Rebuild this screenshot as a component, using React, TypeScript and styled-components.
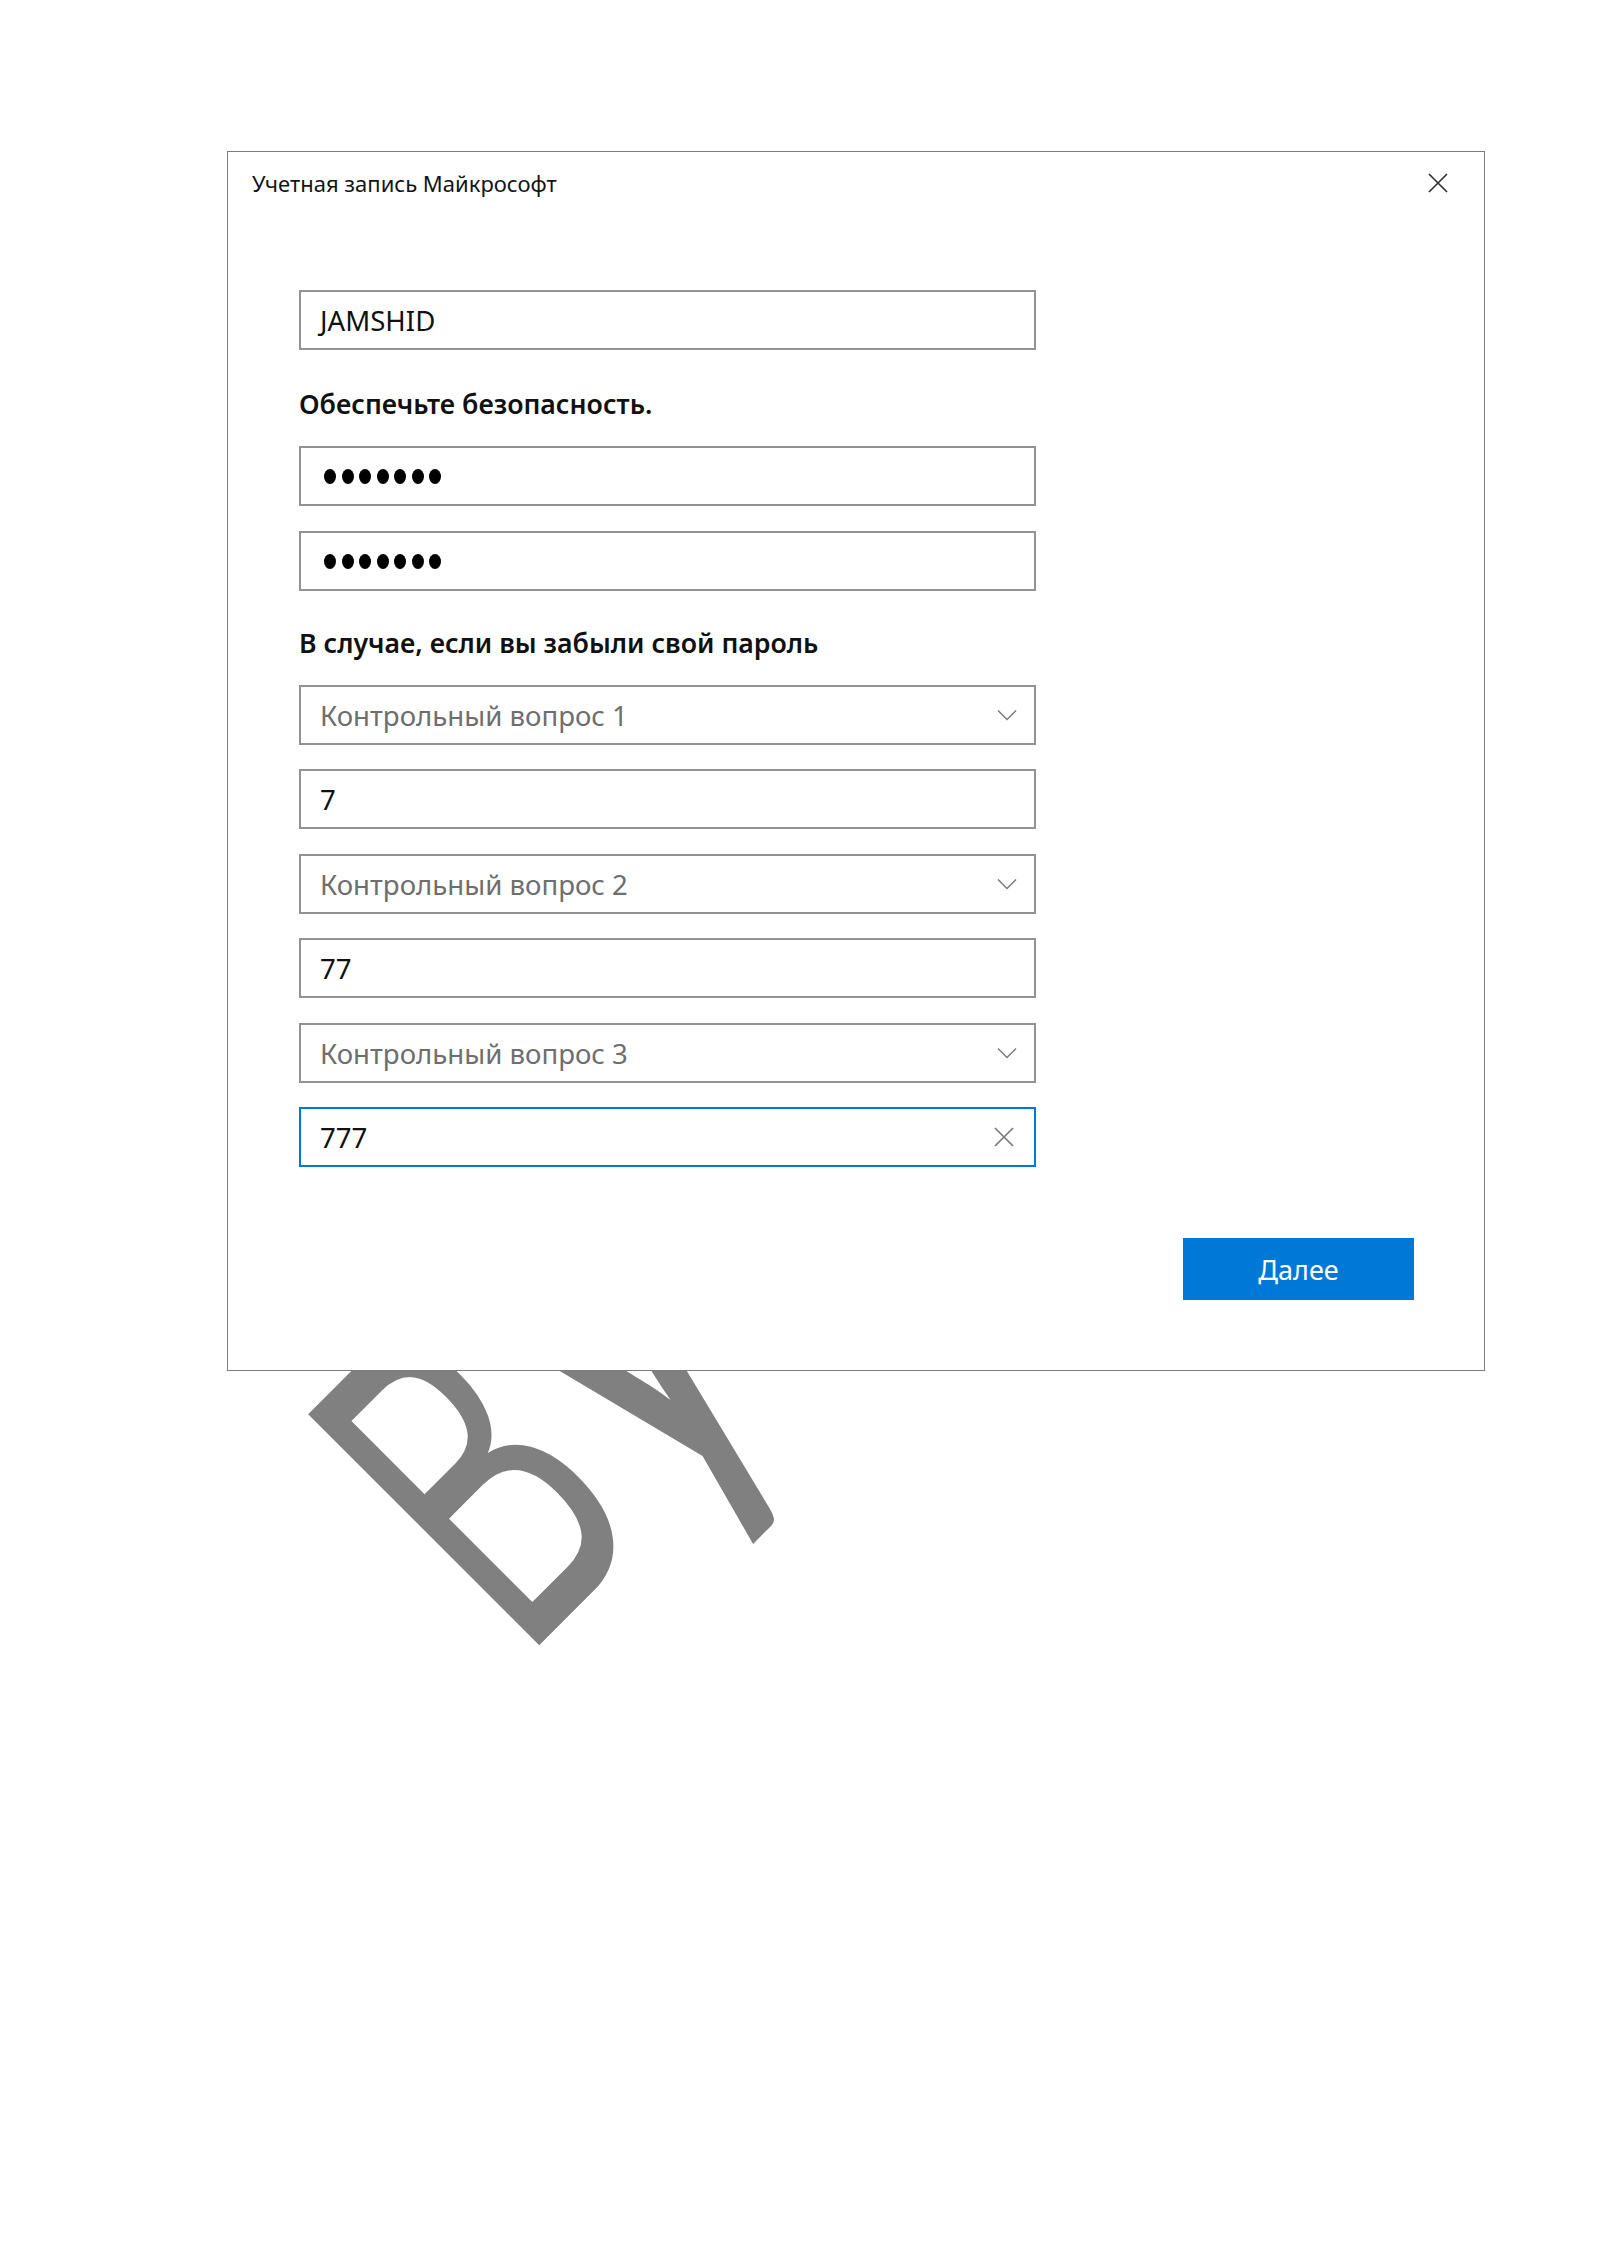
import React from 'react';
import styled, { createGlobalStyle } from 'styled-components';

const GlobalStyle = createGlobalStyle`
  html, body {
    margin: 0;
    padding: 0;
    background: #ffffff;
  }
  body {
    font-family: "Noto Sans", "Open Sans", sans-serif;
  }
`;

/* Page + watermark */
const Page = styled.div`
  position: relative;
  width: 1600px;
  height: 2262px;
  box-sizing: border-box;
  padding: 151px 0 0 227px;
  background: #ffffff;
  overflow: hidden;
`;

// big grey letters behind the dialog
const Watermark = styled.div`
  position: absolute;
  left: 239px;
  top: 1377px;
  z-index: 0;
  font-family: "Liberation Sans", Arial, sans-serif;
  font-size: 475px;
  line-height: 1;
  color: #808080;
  white-space: nowrap;
  transform-origin: 0 0;
  transform: rotate(-45deg) scaleX(0.58);
  user-select: none;
`;

const WatermarkTail = styled.span`
  margin-left: 52px;
  font-family: Lato, "Liberation Sans", sans-serif;
  font-weight: 700;
  line-height: 0;
`;

/* Dialog */
const Dialog = styled.div`
  position: relative;
  z-index: 1;
  width: 1258px;
  height: 1220px;
  box-sizing: border-box;
  border: 1px solid #7d7d7d;
  background: #ffffff;
  display: flex;
  flex-direction: column;
`;

const TitleBar = styled.div`
  height: 62px;
  display: flex;
  align-items: center;
  justify-content: space-between;
  padding: 0 36px 0 24px;
`;

const Title = styled.div`
  font-size: 22px;
  color: #141414;
`;

const CloseButton = styled.button`
  width: 20px;
  height: 20px;
  padding: 0;
  border: none;
  background: none;
  display: flex;
  align-items: center;
  justify-content: center;
`;

const Body = styled.div`
  flex: 1;
  padding: 76px 71px 0;
`;

const Form = styled.div`
  width: 737px;
  display: flex;
  flex-direction: column;
`;

const Stack = styled.div<{ $gap?: number }>`
  display: flex;
  flex-direction: column;
  gap: ${(p) => p.$gap ?? 24.4}px;
`;

const Heading = styled.div<{ $top?: number }>`
  font-size: 26.7px;
  font-weight: 600;
  line-height: 36px;
  color: #111;
  margin: ${(p) => p.$top ?? 36}px 0 24px;
`;

// text box / combo box frame
const Field = styled.div<{ $focused?: boolean }>`
  height: 60px;
  box-sizing: border-box;
  border: 2px solid ${(p) => (p.$focused ? '#0078d7' : '#929292')};
  display: flex;
  align-items: center;
  justify-content: space-between;
  padding: 0 20px 0 19px;
  font-size: 27.6px;
  color: #111;
  background: #ffffff;
`;

const SelectField = styled(Field)`
  color: #6e6e6e;
  padding-right: 17px;
`;

const Dots = styled.div`
  display: flex;
  gap: 5.5px;
  margin-left: 4px;
`;

const Dot = styled.span`
  width: 12px;
  height: 15px;
  border-radius: 50%;
  background: #000;
`;

const Footer = styled.div`
  display: flex;
  justify-content: flex-end;
  padding: 0 70px 70px;
`;

const PrimaryButton = styled.button`
  width: 231px;
  height: 62px;
  border: none;
  background: #0078d7;
  color: #ffffff;
  font-family: inherit;
  font-size: 27px;
`;

function Cross({ size, color }: { size: number; color: string }) {
  return (
    <svg width={size} height={size} viewBox="0 0 20 20">
      <path d="M1 1 L19 19 M19 1 L1 19" stroke={color} strokeWidth="1.7" fill="none" />
    </svg>
  );
}

function Chevron() {
  return (
    <svg width="20" height="12" viewBox="0 0 20 12">
      <path d="M1 1.5 L10 10.5 L19 1.5" stroke="#7a7a7a" strokeWidth="1.5" fill="none" />
    </svg>
  );
}

function Password({ count }: { count: number }) {
  return (
    <Field>
      <Dots>
        {Array.from({ length: count }).map((_, i) => (
          <Dot key={i} />
        ))}
      </Dots>
    </Field>
  );
}

const questions = [
  { label: 'Контрольный вопрос 1', answer: '7' },
  { label: 'Контрольный вопрос 2', answer: '77' },
  { label: 'Контрольный вопрос 3', answer: '777' },
];

export default function App() {
  return (
    <Page>
      <GlobalStyle />
      <Watermark>
        B<WatermarkTail>y</WatermarkTail>
      </Watermark>
      <Dialog>
        <TitleBar>
          <Title>Учетная запись Майкрософт</Title>
          <CloseButton aria-label="Закрыть">
            <Cross size={20} color="#333" />
          </CloseButton>
        </TitleBar>

        <Body>
          <Form>
            <Field>JAMSHID</Field>

            <Heading>Обеспечьте безопасность.</Heading>
            <Stack $gap={25}>
              <Password count={7} />
              <Password count={7} />
            </Stack>

            <Heading $top={34}>В случае, если вы забыли свой пароль</Heading>
            <Stack>
              {questions.map((q, i) => (
                <React.Fragment key={q.label}>
                  <SelectField>
                    <span>{q.label}</span>
                    <Chevron />
                  </SelectField>
                  <Field $focused={i === questions.length - 1}>
                    <span>{q.answer}</span>
                    {i === questions.length - 1 && <Cross size={20} color="#7a7a7a" />}
                  </Field>
                </React.Fragment>
              ))}
            </Stack>
          </Form>
        </Body>

        <Footer>
          <PrimaryButton>Далее</PrimaryButton>
        </Footer>
      </Dialog>
    </Page>
  );
}
